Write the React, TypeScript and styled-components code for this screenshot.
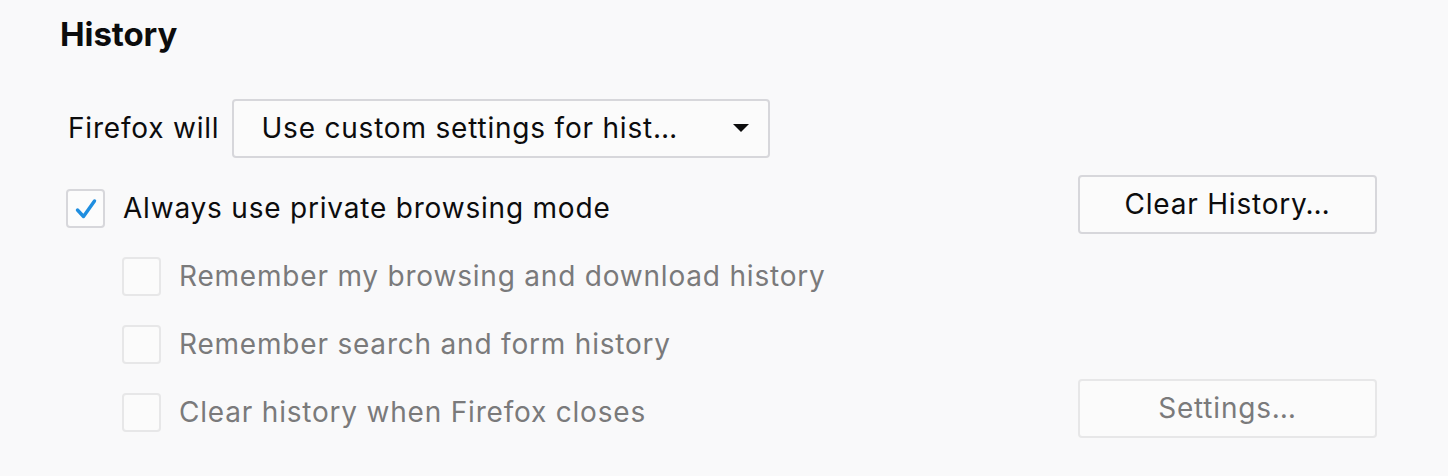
import React from "react";
import styled, { createGlobalStyle } from "styled-components";

const Global = createGlobalStyle`
  html, body { margin: 0; padding: 0; background: #f9f9fa; }
  body { font-family: Inter, "Noto Sans", "Liberation Sans", sans-serif; color: #0c0c0d; }
`;

const Page = styled.div`
  width: 1448px;
  height: 476px;
  box-sizing: border-box;
  padding: 10px 71px 0 60px;
  background: #f9f9fa;
`;

const Heading = styled.h2`
  margin: 0;
  font-size: 33px;
  font-weight: 700;
  line-height: 48px;
  letter-spacing: -0.1px;
`;

const Body = styled.div`
  display: flex;
  flex-direction: column;
  padding-left: 6px;
  margin-top: 40px;
`;

const SelectRow = styled.div`
  display: flex;
  align-items: center;
  gap: 13px;
  height: 60px;
  padding-left: 2px;
  margin-bottom: 16px;
`;

const Label = styled.span<{ $disabled?: boolean }>`
  font-size: 28px;
  letter-spacing: 0.8px;
  line-height: 34px;
  color: ${(p) => (p.$disabled ? "#7a7a7b" : "#0c0c0d")};
  white-space: nowrap;
`;

const Select = styled.div`
  box-sizing: border-box;
  width: 538px;
  height: 59px;
  display: flex;
  align-items: center;
  justify-content: space-between;
  padding: 0 19px 0 27px;
  border: 2px solid #d7d7db;
  border-radius: 4px;
  background: #fbfbfb;
`;

const Arrow = styled.span`
  width: 0;
  height: 0;
  border-left: 8px solid transparent;
  border-right: 8px solid transparent;
  border-top: 8px solid #0c0c0d;
`;

const Row = styled.div<{ $indent?: boolean }>`
  display: flex;
  align-items: center;
  justify-content: space-between;
  height: 68px;
  padding-left: ${(p) => (p.$indent ? "56px" : "0")};
`;

const CheckLabel = styled.label`
  display: flex;
  align-items: center;
  gap: 18px;
`;

const Box = styled.span<{ $disabled?: boolean }>`
  box-sizing: border-box;
  width: 39px;
  height: 39px;
  border: 2px solid ${(p) => (p.$disabled ? "#e7e7e8" : "#d7d7db")};
  border-radius: 4px;
  background: ${(p) => (p.$disabled ? "#fbfbfb" : "#fcfcfc")};
  display: flex;
  align-items: center;
  justify-content: center;
`;

const Button = styled.button<{ $disabled?: boolean }>`
  box-sizing: border-box;
  width: 299px;
  height: 59px;
  margin-bottom: 8px;
  border: 2px solid ${(p) => (p.$disabled ? "#e7e7e8" : "#d7d7db")};
  border-radius: 4px;
  background: #fbfbfb;
  font-family: inherit;
  font-size: 28px;
  letter-spacing: 0.8px;
  color: ${(p) => (p.$disabled ? "#7a7a7b" : "#0c0c0d")};
  padding: 0;
`;

const Check = () => (
  <svg width="35" height="35" viewBox="0 0 35 35">
    <path
      d="M9.5 19 L15.5 25.5 L26.5 10"
      fill="none"
      stroke="#1f8ee0"
      strokeWidth="3.4"
      strokeLinecap="round"
      strokeLinejoin="round"
    />
  </svg>
);

export default function App() {
  return (
    <>
      <Global />
      <Page>
        <Heading>History</Heading>
        <Body>
          <SelectRow>
            <Label>Firefox will</Label>
            <Select>
              <Label>Use custom settings for hist…</Label>
              <Arrow />
            </Select>
          </SelectRow>
          <Row>
            <CheckLabel>
              <Box>
                <Check />
              </Box>
              <Label>Always use private browsing mode</Label>
            </CheckLabel>
            <Button>Clear History…</Button>
          </Row>
          <Row $indent>
            <CheckLabel>
              <Box $disabled />
              <Label $disabled>Remember my browsing and download history</Label>
            </CheckLabel>
          </Row>
          <Row $indent>
            <CheckLabel>
              <Box $disabled />
              <Label $disabled>Remember search and form history</Label>
            </CheckLabel>
          </Row>
          <Row $indent>
            <CheckLabel>
              <Box $disabled />
              <Label $disabled>Clear history when Firefox closes</Label>
            </CheckLabel>
            <Button $disabled>Settings…</Button>
          </Row>
        </Body>
      </Page>
    </>
  );
}
